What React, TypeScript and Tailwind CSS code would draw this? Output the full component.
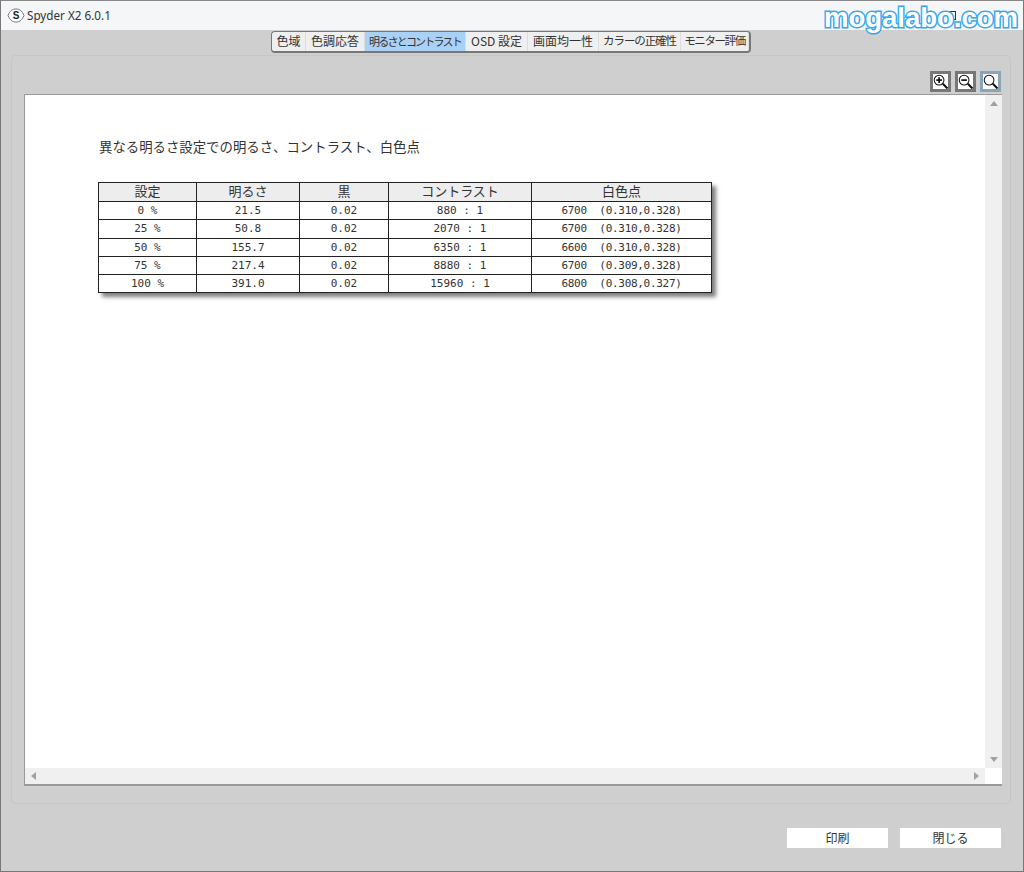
import React from 'react';

const jp = "font-['Noto_Sans_CJK_JP','Noto_Sans',sans-serif]";

const tabs = [
  { label: '色域', width: 'w-[34px]', text: 'text-[12px]' },
  { label: '色調応答', width: 'w-[59px]', text: 'text-[12px]' },
  { label: '明るさとコントラスト', width: 'w-[101px]', text: 'text-[11px] tracking-[-1.8px]', active: true },
  { label: 'OSD 設定', width: 'w-[62px]', text: 'text-[12px]' },
  { label: '画面均一性', width: 'w-[71px]', text: 'text-[12px]' },
  { label: 'カラーの正確性', width: 'w-[82px]', text: 'text-[11.5px] tracking-[-1.1px]' },
  { label: 'モニター評価', width: 'w-[68px]', text: 'text-[11.5px] tracking-[-1.4px]' },
];

const rows = [
  ['0 %', '21.5', '0.02', '880 : 1', '6700  (0.310,0.328)'],
  ['25 %', '50.8', '0.02', '2070 : 1', '6700  (0.310,0.328)'],
  ['50 %', '155.7', '0.02', '6350 : 1', '6600  (0.310,0.328)'],
  ['75 %', '217.4', '0.02', '8880 : 1', '6700  (0.309,0.328)'],
  ['100 %', '391.0', '0.02', '15960 : 1', '6800  (0.308,0.327)'],
];

const headers = ['設定', '明るさ', '黒', 'コントラスト', '白色点'];

const ZoomIcon: React.FC<{ kind: 'in' | 'out' | 'fit' }> = ({ kind }) => (
  <svg width="15" height="15" viewBox="0 0 16 16" fill="none" stroke="#111">
    <circle cx="6.5" cy="6.5" r="5.2" strokeWidth="1.1" />
    <path d="M10.5 10.5 L15.5 15.5" strokeWidth="2.2" />
    {kind !== 'fit' && <path d="M3.5 6.5 H9.5" strokeWidth="1.8" />}
    {kind === 'in' && <path d="M6.5 3.5 V9.5" strokeWidth="1.8" />}
  </svg>
);

const App: React.FC = () => {
  return (
    <div className={`${jp} relative flex h-[872px] w-[1024px] flex-col overflow-hidden border border-[#777] border-t-[#888] bg-[#cfcfcf] text-[#333]`}>
      {/* title bar */}
      <div className="flex h-[29px] shrink-0 items-center bg-[#f5f6f8] pl-[6px]">
        <svg width="18" height="15" viewBox="0 0 18 15">
          <path d="M1 7.5 C3 3 5 1 9 1 C13 1 15 3 17 7.5 C15 12 13 14 9 14 C5 14 3 12 1 7.5 Z" fill="#fff" stroke="#666" strokeWidth="0.9" />
          <text x="9" y="11" textAnchor="middle" fontSize="10" fontWeight="700" fontFamily="Liberation Sans" fill="#222">
            S
          </text>
        </svg>
        <span className="ml-[2px] font-['Noto_Sans',sans-serif] text-[11.7px] text-[#333]">Spyder X2 6.0.1</span>
        <div className="ml-auto mr-[18px] flex items-center gap-[42px]">
          <div className="h-[9px] w-[8px] border border-[#333]" />
          <svg width="7" height="7" viewBox="0 0 7 7" stroke="#666">
            <path d="M1 1 L6 6 M6 1 L1 6" />
          </svg>
        </div>
      </div>

      {/* watermark */}
      <div className="absolute left-[823px] top-[1px] font-['Liberation_Sans',sans-serif] text-[27.5px] font-bold leading-[32px] text-white [-webkit-text-stroke:3px_#35a7ec] [paint-order:stroke_fill]">
        mogalabo.com
      </div>

      {/* tabs */}
      <div className="flex h-[22px] shrink-0 justify-center pr-[2px] pt-[1px]">
        <div className="flex h-[22px] overflow-hidden rounded-[4px] border border-[#777] border-b-2 border-r-2 bg-[#efefef]">
          {tabs.map((tab) => (
            <div
              key={tab.label}
              className={`${tab.width} ${tab.text} flex items-center justify-center whitespace-nowrap border-r border-[#ddd] pb-[1px] leading-none ${
                tab.active ? 'bg-[#a9d0f5]' : ''
              }`}
            >
              {tab.label}
            </div>
          ))}
        </div>
      </div>

      {/* main panel */}
      <div className="ml-[10px] mr-[12px] mt-[3px] flex h-[749px] flex-col rounded-[4px] border border-[#c6c6c6] pl-[12px] pr-[8px]">
        <div className="flex h-[38px] shrink-0 items-end justify-end gap-[4px] pb-[2px] pr-[1px]">
          {(['in', 'out', 'fit'] as const).map((kind) => (
            <div
              key={kind}
              className={`flex h-[21px] w-[21px] items-center justify-center border-[3px] bg-white ${
                kind === 'fit' ? 'border-[#8aa4b8]' : 'border-[#777]'
              }`}
            >
              <ZoomIcon kind={kind} />
            </div>
          ))}
        </div>

        {/* report viewer */}
        <div className="flex h-[692px] w-[978px] flex-col border-b-2 border-l border-t border-[#999] bg-white">
          <div className="flex min-h-0 flex-1">
            <div className="flex-1 pl-[73px] pt-[41px]">
              <h1 className="ml-[1px] text-[13.4px] font-normal leading-[20px] text-[#333]">
                異なる明るさ設定での明るさ、コントラスト、白色点
              </h1>
              <table className="mt-[26px] w-[613px] table-fixed border-collapse border-[1.5px] border-[#222] shadow-[4px_4px_4px_rgba(0,0,0,0.5)]">
                <colgroup>
                  <col className="w-[98px]" />
                  <col className="w-[103px]" />
                  <col className="w-[89px]" />
                  <col className="w-[143px]" />
                  <col className="w-[180px]" />
                </colgroup>
                <thead>
                  <tr className="h-[19px] bg-[#ededed]">
                    {headers.map((h) => (
                      <th key={h} className="border border-[#222] p-0 pb-[3px] text-center text-[13px] font-normal leading-none">
                        {h}
                      </th>
                    ))}
                  </tr>
                </thead>
                <tbody>
                  {rows.map((row) => (
                    <tr key={row[0]} className="h-[18.3px]">
                      {row.map((cell, i) => (
                        <td
                          key={i}
                          className={`border border-[#222] p-0 text-center font-['DejaVu_Sans_Mono',monospace] text-[11px] leading-none whitespace-pre ${
                            i === 4 ? 'tracking-[-0.3px]' : ''
                          }`}
                        >
                          {cell}
                        </td>
                      ))}
                    </tr>
                  ))}
                </tbody>
              </table>
            </div>
            {/* vertical scrollbar */}
            <div className="flex w-[17px] shrink-0 flex-col items-center justify-between bg-[#f0f0f0] py-[6px]">
              <div className="h-0 w-0 border-x-[4px] border-b-[5px] border-x-transparent border-b-[#a0a0a0]" />
              <div className="h-0 w-0 border-x-[4px] border-t-[5px] border-x-transparent border-t-[#a0a0a0]" />
            </div>
          </div>
          {/* horizontal scrollbar */}
          <div className="flex h-[16px] shrink-0">
            <div className="flex flex-1 items-center justify-between bg-[#f0f0f0] px-[6px]">
              <div className="h-0 w-0 border-y-[4px] border-r-[5px] border-y-transparent border-r-[#a0a0a0]" />
              <div className="h-0 w-0 border-y-[4px] border-l-[5px] border-y-transparent border-l-[#a0a0a0]" />
            </div>
            <div className="w-[17px] bg-white" />
          </div>
        </div>
      </div>

      {/* footer buttons */}
      <div className="mr-[22px] mt-[24px] flex justify-end gap-[12px]">
        <div className="flex h-[20px] w-[101px] items-center justify-center bg-white text-[12px] leading-none">印刷</div>
        <div className="flex h-[20px] w-[101px] items-center justify-center bg-white text-[12px] leading-none">閉じる</div>
      </div>
    </div>
  );
};

export default App;
